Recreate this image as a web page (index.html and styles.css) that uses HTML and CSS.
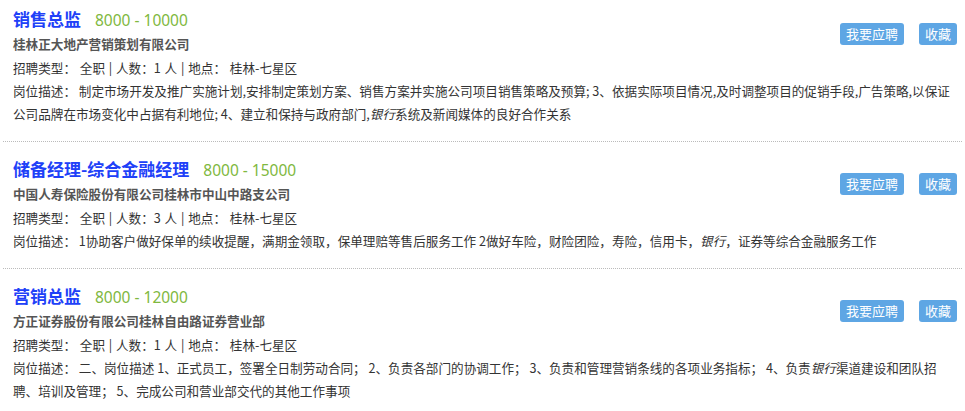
FILE: index.html
```html
<!DOCTYPE html>
<html>
<head>
    <meta charset="utf-8">
    <link rel="stylesheet" href="styles.css">
</head>
<body>

    <div class="job-list">

        <div class="job-item">
            <div class="job-head">
                <div class="job-main">
                    <div class="job-title"><a href="#">销售总监</a><span class="salary">8000 - 10000</span></div>
                    <div class="company">桂林正大地产营销策划有限公司</div>
                </div>
                <div class="job-btns">
                    <button class="blue-button">我要应聘</button>
                    <button class="blue-button">收藏</button>
                </div>
            </div>
            <div class="job-info">招聘类型：&nbsp;全职 | 人数：1 人 | 地点：&nbsp;桂林-七星区</div>
            <div class="job-desc">岗位描述：&nbsp;制定市场开发及推广实施计划,安排制定策划方案、销售方案并实施公司项目销售策略及预算; 3、依据实际项目情况,及时调整项目的促销手段,广告策略,以保证公司品牌在市场变化中占据有利地位; 4、建立和保持与政府部门,<em>银行</em>系统及新闻媒体的良好合作关系</div>
        </div>

        <div class="job-item">
            <div class="job-head">
                <div class="job-main">
                    <div class="job-title"><a href="#">储备经理-综合金融经理</a><span class="salary">8000 - 15000</span></div>
                    <div class="company">中国人寿保险股份有限公司桂林市中山中路支公司</div>
                </div>
                <div class="job-btns">
                    <button class="blue-button">我要应聘</button>
                    <button class="blue-button">收藏</button>
                </div>
            </div>
            <div class="job-info">招聘类型：&nbsp;全职 | 人数：3 人 | 地点：&nbsp;桂林-七星区</div>
            <div class="job-desc">岗位描述：&nbsp;1协助客户做好保单的续收提醒，满期金领取，保单理赔等售后服务工作 2做好车险，财险团险，寿险，信用卡，<em>银行</em>，证券等综合金融服务工作</div>
        </div>

        <div class="job-item">
            <div class="job-head">
                <div class="job-main">
                    <div class="job-title"><a href="#">营销总监</a><span class="salary">8000 - 12000</span></div>
                    <div class="company">方正证券股份有限公司桂林自由路证券营业部</div>
                </div>
                <div class="job-btns">
                    <button class="blue-button">我要应聘</button>
                    <button class="blue-button">收藏</button>
                </div>
            </div>
            <div class="job-info">招聘类型：&nbsp;全职 | 人数：1 人 | 地点：&nbsp;桂林-七星区</div>
            <div class="job-desc">岗位描述：&nbsp;二、岗位描述 1、正式员工，签署全日制劳动合同； 2、负责各部门的协调工作； 3、负责和管理营销条线的各项业务指标； 4、负责<em>银行</em>渠道建设和团队招聘、培训及管理； 5、完成公司和营业部交代的其他工作事项</div>
        </div>

    </div>

</body>
</html>
```

FILE: styles.css
```css
body {
    margin: 0;
    font-family: "Noto Sans CJK SC", sans-serif;
    background-color: #fff;
    color: #333;
    font-size: 12.6px;
}

.job-list {
    padding: 0 3px;
}

.job-item {
    padding: 14px 10px 16px 10px;
    border-bottom: 1px dotted #bbb;
}

.job-item:first-child {
    padding-top: 6px;
}

.job-head {
    display: flex;
    justify-content: space-between;
    align-items: flex-start;
}

.job-title {
    line-height: 26px;
    height: 26px;
}

.job-title a {
    font-size: 17px;
    font-weight: bold;
    color: #2040f8;
    text-decoration: none;
}

.salary {
    margin-left: 14px;
    font-family: "Noto Sans", sans-serif;
    font-size: 15.5px;
    color: #80b840;
}

.company {
    font-weight: bold;
    color: #555;
    line-height: 24px;
}

.job-btns {
    display: flex;
    gap: 15px;
    margin-top: 17px;
    margin-right: -5px;
}

.blue-button {
    padding: 0 6px;
    height: 22px;
    line-height: 22px;
    border: none;
    border-radius: 3px;
    background-color: #5ea6e4;
    color: #fff;
    font-family: inherit;
    font-size: 13px;
    cursor: pointer;
}

.blue-button:hover {
    background-color: #4a94d6;
}

.job-info,
.job-desc {
    line-height: 23px;
}

.job-info {
    word-spacing: 1px;
}
```
